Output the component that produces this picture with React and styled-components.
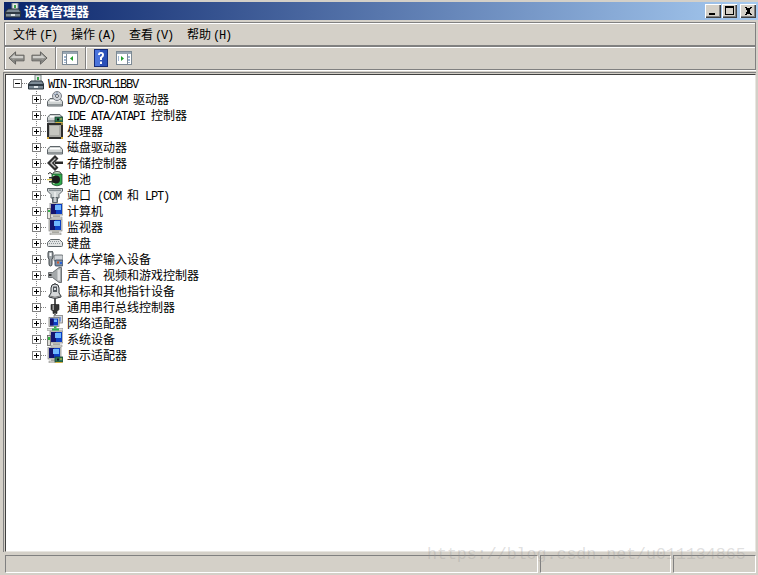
import React from "react";
import styled, { createGlobalStyle } from "styled-components";

const CJK = `"Noto Sans CJK SC", "Liberation Sans", sans-serif`;

const Global = createGlobalStyle`
  html, body { margin: 0; padding: 0; background: #d4d0c8; }
`;

const Win = styled.div`
  position: relative;
  box-sizing: border-box;
  width: 758px;
  height: 575px;
  padding: 2px 0 2px 4px;
  display: flex;
  flex-direction: column;
  background: #d4d0c8;
  overflow: hidden;
  font-family: ${CJK};
  font-size: 12px;
  color: #000;
`;
const TitleBar = styled.div`
  height: 18px;
  flex: none;
  display: flex;
  align-items: center;
  gap: 3px;
  padding: 0 2px 0 1px;
  background: linear-gradient(90deg, #0a246a 0%, #a6caf0 100%);
`;
const TitleText = styled.div`
  flex: 1;
  color: #fff;
  font-size: 13px;
  font-weight: 700;
  line-height: 18px;
`;
const WinBtn = styled.button`
  box-sizing: border-box;
  width: ${(p) => p.$w}px;
  height: 14px;
  margin-left: ${(p) => p.$ml || 0}px;
  padding: 0;
  display: flex;
  align-items: center;
  justify-content: center;
  background: #d4d0c8;
  border: 0;
  box-shadow: inset 1px 1px 0 #fff, inset -1px -1px 0 #404040, inset -2px -2px 0 #808080;
`;
const Band = styled.div`
  box-sizing: border-box;
  flex: none;
  margin: ${(p) => p.$mt}px 2px 0 0;
  height: ${(p) => p.$h}px;
  display: flex;
  align-items: center;
  gap: ${(p) => p.$gap}px;
  padding-left: ${(p) => p.$pl}px;
  border: 1px solid #808080;
  box-shadow: inset 1px 1px 0 #fff, 0 1px 0 #fff;
`;
const MenuItem = styled.div`
  line-height: 16px;
  white-space: pre;
`;
const MenuKey = styled.span`
  margin-left: 2px;
`;
const Mono = styled.span`
  font-family: "Liberation Mono", monospace;
  font-size: 12px;
  line-height: 1;
  letter-spacing: -1.2px;
  white-space: pre;
`;
const ToolGroup = styled.div`
  display: flex;
  align-items: center;
  gap: ${(p) => p.$gap || 0}px;
  margin: 0 ${(p) => p.$mr || 0}px 0 ${(p) => p.$ml || 0}px;
`;
const ToolSep = styled.div`
  width: 2px;
  height: 22px;
  background: #808080;
  border-right: 1px solid #fff;
  box-sizing: border-box;
  flex: none;
`;
const Tree = styled.div`
  flex: 1;
  min-height: 0;
  margin: 4px 2px 0 1px;
  background: #fff;
  border-top: 1px solid #404040;
  border-left: 1px solid #404040;
  border-right: 1px solid #e8e6e1;
  border-bottom: 1px solid #e8e6e1;
  box-shadow: 0 0 0 1px #d4d0c8, -1px -1px 0 1px #808080, 1px 1px 0 0 #fff;
`;
const Row = styled.div`
  position: relative;
  height: 16px;
  display: flex;
  align-items: center;
  padding-left: ${(p) => p.$indent}px;
  white-space: pre;
  line-height: 16px;
`;
const Label = styled.span`
  display: block;
  height: 16px;
  line-height: 16px;
`;
const VLine = styled.span`
  position: absolute;
  left: ${(p) => p.$x}px;
  top: 0;
  width: 1px;
  height: ${(p) => (p.$last ? 8 : 16)}px;
  background: repeating-linear-gradient(180deg, #808080 0 1px, transparent 1px 2px);
`;
const Expander = styled.span`
  position: relative;
  box-sizing: border-box;
  width: 9px;
  height: 9px;
  flex: none;
  background: #fff;
  border: 1px solid #808080;
  z-index: 1;
  &::before {
    content: "";
    position: absolute;
    left: 1px;
    top: 3px;
    width: 5px;
    height: 1px;
    background: #000;
  }
  &::after {
    content: "";
    display: ${(p) => (p.$open ? "none" : "block")};
    position: absolute;
    left: 3px;
    top: 1px;
    width: 1px;
    height: 5px;
    background: #000;
  }
`;
const HLine = styled.span`
  width: 6px;
  height: 1px;
  flex: none;
  background: repeating-linear-gradient(90deg, #808080 0 1px, transparent 1px 2px);
`;
const IconWrap = styled.span`
  width: 16px;
  height: 16px;
  flex: none;
  display: flex;
  margin-right: 4px;
`;
const Status = styled.div`
  flex: none;
  display: flex;
  gap: 2px;
  margin: 3px 2px 0 1px;
  height: 18px;
`;
const Panel = styled.div`
  box-sizing: border-box;
  width: ${(p) => p.$w}px;
  border-top: 1px solid #808080;
  border-left: 1px solid #808080;
  border-right: 1px solid #fff;
  border-bottom: 1px solid #fff;
`;
const Watermark = styled.div`
  position: absolute;
  left: 427px;
  top: 545px;
  font-family: "Liberation Mono", monospace;
  font-size: 16.6px;
  line-height: 20px;
  color: rgba(150, 150, 150, 0.3);
  white-space: pre;
`;

const Svg = ({ children, size = 16, crisp }) => (
  <svg width={size} height={size} viewBox="0 0 16 16" shapeRendering={crisp ? "crispEdges" : undefined}>
    {children}
  </svg>
);

const Server = () => (
  <Svg>
    <rect x="7" y="0" width="6" height="7" fill="#e8e8e8" stroke="#7a8a8a" strokeWidth="1" />
    <rect x="9" y="2" width="2" height="3" fill="#3aa14a" />
    <path d="M3 6h11l1.500 3v5H.5V9z" fill="#7d8b96" stroke="#2a343c" />
    <rect x="1" y="9" width="14" height="2" fill="#2f3a44" />
    <rect x="6" y="11" width="4" height="2" fill="#dfe5e8" />
  </Svg>
);
const DiskBase = () => (
  <>
    <path d="M3 7.500h10l2.500 3v4.500H.5v-4.500z" fill="#cfd3d3" stroke="#5f666a" />
    <rect x="1" y="13" width="14" height="2" fill="#8e9496" />
    <rect x="3" y="9" width="10" height="1.500" fill="#fff" />
  </>
);
const Dvd = () => (
  <Svg>
    <DiskBase />
    <circle cx="10" cy="5" r="4.500" fill="#d0d4da" stroke="#7a7f86" />
    <circle cx="10" cy="5" r="1.500" fill="#fff" stroke="#5b6065" />
    <path d="M10 1v2M7 3l2 1" stroke="#7f92ad" />
  </Svg>
);
const Card = () => (
  <>
    <rect x="8" y="10" width="8" height="5" fill="#2d7a54" stroke="#1a4030" strokeWidth=".8" />
    <rect x="10" y="11.500" width="2" height="2" fill="#111" />
    <rect x="13" y="11.500" width="2" height="1" fill="#e5c64a" />
    <rect x="8.500" y="15" width="7" height="1" fill="#d6b23c" />
  </>
);
const Ide = () => (
  <Svg>
    <DiskBase />
    <Card />
  </Svg>
);
const Cpu = () => (
  <Svg crisp>
    <rect x="0" y="0" width="16" height="16" fill="#2d2d2d" />
    <rect x="2" y="2" width="12" height="12" fill="#a9a9a4" />
    <rect x="3" y="3" width="9" height="9" fill="#c6c6c0" />
    <rect x="14" y="14" width="2" height="2" fill="#d8a93a" />
    <rect x="0" y="14" width="2" height="2" fill="#d8a93a" />
    <rect x="14" y="0" width="2" height="2" fill="#8a7a3a" />
  </Svg>
);
const Disk = () => (
  <Svg>
    <DiskBase />
  </Svg>
);
const Storage = () => (
  <Svg>
    <path d="M8 0 0 8l8 8 3.500-3.500L7 8l4.500-4.500z" fill="#2f2f2f" />
    <path d="M8 3 3 8l5 5 .9-.9L4.800 8l4.100-4.100z" fill="#c8c8c8" />
    <rect x="8" y="6.500" width="8" height="2.500" fill="#262626" />
  </Svg>
);
const Battery = () => (
  <Svg>
    <path d="M1 3q2-3 4 0" stroke="#222" fill="none" />
    <ellipse cx="10" cy="2.500" rx="4" ry="2" fill="#c9e8c7" stroke="#222" strokeWidth=".8" />
    <path d="M5 3h10v10q-5 3.500-10 0z" fill="#2fa84a" stroke="#1d4e2c" strokeWidth=".8" />
    <rect x="6" y="4" width="2" height="9" fill="#a3e2a1" />
    <rect x="2" y="6" width="5" height="1.500" fill="#333" />
    <rect x="2" y="10" width="5" height="1.500" fill="#333" />
    <circle cx="9" cy="8.500" r="4" fill="#1c1c1c" />
    <rect x="0" y="8" width="5" height="1.200" fill="#d9c84f" />
  </Svg>
);
const Port = () => (
  <Svg>
    <path d="M.5 1.500h15v2.500l-3.500 3.500v3.500H4V7.500L.5 4z" fill="#cdd2d3" stroke="#5c6468" />
    <rect x="2" y="2.500" width="12" height="1.500" fill="#8a9296" />
    <path d="M5.500 10.500h5v5h-5z" fill="#949ca0" stroke="#5c6468" />
    <rect x="7.500" y="5" width="1" height="10" fill="#fff" />
  </Svg>
);
const Screen = ({ x = 3 }) => (
  <>
    <rect x={x} y="0" width="13" height="12" fill="#d8d8d0" stroke="#6d6d6d" strokeWidth=".6" />
    <rect x={x + 1} y="1" width="11" height="10" fill="#0c3fc4" />
    <rect x={x + 1} y="1" width="5" height="10" fill="#14146e" />
    <rect x={x + 5} y="2" width="6" height="5" fill="#6fb8ff" />
    <rect x={x + 3} y="12" width="7" height="2" fill="#b8b8b0" />
    <rect x={x + 1} y="14" width="11" height="2" fill="#dcdcd6" stroke="#7a7a7a" strokeWidth=".5" />
  </>
);
const Tower = () => (
  <>
    <rect x="0.500" y="5.500" width="3" height="10" fill="#e8e8e2" stroke="#707070" strokeWidth=".8" />
    <rect x="1" y="7" width="2" height="2" fill="#35b34a" />
  </>
);
const Computer = () => (
  <Svg>
    <Screen />
    <Tower />
  </Svg>
);
const Monitor = () => (
  <Svg>
    <Screen x={2} />
  </Svg>
);
const Keyboard = () => (
  <Svg>
    <path d="M3.500 4.500h9l3 3v3q0 1-1 1h-13q-1 0-1-1v-3z" fill="#e2e4e4" stroke="#60686c" />
    <path d="M3 6.500h10M2 8.500h12" stroke="#8e969a" strokeDasharray="1 1" />
  </Svg>
);
const Hid = () => (
  <Svg>
    <path d="M1 2q0-2 2-2h1q2 0 2 2v4q0 1-1 2v5q0 2-1.500 2T2 13V8Q1 7 1 6z" fill="#9ea4a8" stroke="#2d3438" strokeWidth=".9" />
    <rect x="2.500" y="2" width="2" height="3" fill="#fff" />
    <rect x="7" y="4" width="9" height="6" rx="1" fill="#d0d4d8" stroke="#50585c" strokeWidth=".8" />
    <rect x="8" y="9" width="8" height="6" rx="1" fill="#7a90a8" stroke="#2d3a50" strokeWidth=".8" />
    <rect x="10" y="10.500" width="2" height="2" fill="#d85a2a" />
    <rect x="13" y="11" width="2" height="2" fill="#2a62d8" />
  </Svg>
);
const Sound = () => (
  <Svg>
    <path d="M1.500 5.500h4L12 .5h2.500v15H12L5.500 10.500h-4z" fill="#a4a8aa" stroke="#565b5e" strokeWidth=".8" />
    <rect x="10.500" y="2.500" width="2.500" height="11" fill="#dfe1e2" />
    <rect x="2" y="7" width="2.500" height="2" fill="#333" />
  </Svg>
);
const Mouse = () => (
  <Svg>
    <path d="M8 0v2" stroke="#333" />
    <path d="M4 5q0-4 4-4t4 4v5l2 3v1q-6 3-12 0v-1l2-3z" fill="#d6d8da" stroke="#2f3438" />
    <path d="M6 3.500h4V9H6z" fill="#50565c" />
    <path d="M7 5h2v2H7z" fill="#d8dde0" />
    <path d="M3 13q5 2.500 10 0" stroke="#777" fill="none" />
  </Svg>
);
const Usb = () => (
  <Svg>
    <rect x="7" y="0" width="2" height="6" fill="#555" />
    <path d="M4 5.500h8v5l-2 2v2H6v-2l-2-2z" fill="#333" stroke="#1c1c1c" strokeWidth=".6" />
    <rect x="5.500" y="6" width="1.500" height="5" fill="#a0a0a0" />
    <rect x="7" y="14" width="2" height="2" fill="#777" />
  </Svg>
);
const Network = () => (
  <Svg>
    <rect x="7" y="0.500" width="8.500" height="7.500" fill="#d4d8da" stroke="#707070" strokeWidth=".7" />
    <rect x="8.500" y="2" width="5.500" height="4.500" fill="#7d98d8" />
    <rect x="2" y="2.500" width="10" height="9" fill="#dcdcd4" stroke="#707070" strokeWidth=".7" />
    <rect x="3" y="3.500" width="8" height="7" fill="#0c3fc4" />
    <rect x="3" y="3.500" width="3.500" height="7" fill="#14146e" />
    <rect x="7" y="4.500" width="3" height="2.500" fill="#6fb8ff" />
    <rect x="7" y="11.500" width="2.500" height="2" fill="#2bb24a" />
    <rect x="0" y="13.500" width="16" height="2" fill="#dcdedc" stroke="#808080" strokeWidth=".5" />
    <rect x="5" y="13.500" width="7" height="2" fill="#2bb24a" />
  </Svg>
);
const System = () => (
  <Svg>
    <Screen />
    <rect x="0.500" y="4.500" width="3" height="10" fill="#dadad4" stroke="#606060" strokeWidth=".8" />
    <rect x="1" y="6" width="2" height="3" fill="#30b040" />
  </Svg>
);
const Display = () => (
  <Svg>
    <Screen x={1} />
    <Card />
  </Svg>
);

const Arrow = ({ flip }) => (
  <svg width="17" height="16" viewBox="0 0 18 16">
    <g transform={flip ? "matrix(-1 0 0 1 18 0)" : undefined}>
      <path d="M8 1.500 1 8l7 6.500V11h9V5H8z" fill="#9c9c98" stroke="#5e5e5a" />
      <path d="M7 4 3 8h13V6H7z" fill="#cfcfcb" />
      <path d="M3 8.500l4 3.500v-2h9" fill="none" stroke="#7a7a76" />
    </g>
  </svg>
);
const Panes = ({ right }) => (
  <svg width="16" height="14" viewBox="0 0 16 14" shapeRendering="crispEdges">
    <rect x="0.500" y="0.500" width="15" height="13" fill="#fff" stroke="#7d8a94" />
    <rect x="1" y="1" width="14" height="2" fill="#9aa8b4" />
    {right ? (
      <>
        <rect x="11" y="3" width="1" height="10" fill="#7d8a94" />
        <rect x="12" y="5" width="2" height="2" fill="#9fb6d0" />
        <rect x="12" y="8" width="2" height="2" fill="#9fb6d0" />
        <rect x="12" y="11" width="2" height="1" fill="#9fb6d0" />
        <path d="M5 5v5l3-2.500z" fill="#22a02c" shapeRendering="auto" />
        <rect x="2" y="5" width="1" height="5" fill="#9fb6d0" />
      </>
    ) : (
      <>
        <rect x="4" y="3" width="1" height="10" fill="#7d8a94" />
        <rect x="2" y="5" width="2" height="2" fill="#9fb6d0" />
        <rect x="2" y="8" width="2" height="2" fill="#9fb6d0" />
        <rect x="2" y="11" width="2" height="1" fill="#9fb6d0" />
        <path d="M11 5v5L8 7.500z" fill="#22a02c" shapeRendering="auto" />
      </>
    )}
  </svg>
);
const Help = () => (
  <svg width="14" height="18" viewBox="0 0 14 18">
    <rect x="0.500" y="0.500" width="13" height="17" fill="#2a50b8" stroke="#152c78" />
    <rect x="1" y="1" width="5" height="16" fill="#4a74dc" />
    <path d="M4 6q0-3 3-3t3 3q0 2-2 3v2H6V8q2-1 2-2.200 0-1-1-1t-1 1.200zM6 12.500h2V15H6z" fill="#fff" />
  </svg>
);

const Minimize = () => (
  <svg width="8" height="8" viewBox="0 0 8 8" shapeRendering="crispEdges"><rect x="0" y="6" width="6" height="2" fill="#000" /></svg>
);
const Maximize = () => (
  <svg width="10" height="10" viewBox="0 0 10 10" shapeRendering="crispEdges"><path d="M.5 1.500h8v7h-8z" fill="none" stroke="#000" /><rect x="0" y="0" width="9" height="2" fill="#000" /></svg>
);
const Close = () => (
  <svg width="9" height="8" viewBox="0 0 9 8" shapeRendering="crispEdges">
    <path d="M0 0h2l1 1h2l1-1h2L6 2v1L5 4l1 1v1l2 2H6L5 7H3L2 8H0l2-2V5l1-1-1-1V2z" fill="#000" />
  </svg>
);

const rows = [
  [Dvd, <><Mono>DVD/CD-ROM </Mono>驱动器</>],
  [Ide, <><Mono>IDE ATA/ATAPI </Mono>控制器</>],
  [Cpu, "处理器"],
  [Disk, "磁盘驱动器"],
  [Storage, "存储控制器"],
  [Battery, "电池"],
  [Port, <>端口<Mono> (COM </Mono>和<Mono> LPT)</Mono></>],
  [Computer, "计算机"],
  [Monitor, "监视器"],
  [Keyboard, "键盘"],
  [Hid, "人体学输入设备"],
  [Sound, "声音、视频和游戏控制器"],
  [Mouse, "鼠标和其他指针设备"],
  [Usb, "通用串行总线控制器"],
  [Network, "网络适配器"],
  [System, "系统设备"],
  [Display, "显示适配器"],
];

const menus = [
  ["文件", "(F)"],
  ["操作", "(A)"],
  ["查看", "(V)"],
  ["帮助", "(H)"],
];

export default function App() {
  return (
    <Win>
      <Global />
      <TitleBar>
        <Server />
        <TitleText>设备管理器</TitleText>
        <WinBtn $w={16}><Minimize /></WinBtn>
        <WinBtn $w={15} $ml={-2}><Maximize /></WinBtn>
        <WinBtn $w={16}><Close /></WinBtn>
      </TitleBar>
      <Band $mt={2} $h={24} $gap={14} $pl={8}>
        {menus.map(([a, b]) => (
          <MenuItem key={a}>{a}<MenuKey><Mono>{b}</Mono></MenuKey></MenuItem>
        ))}
      </Band>
      <Band $mt={0} $h={24} $gap={5} $pl={3}>
        <ToolGroup $gap={6} $mr={2}><Arrow /><Arrow flip /></ToolGroup>
        <ToolSep />
        <ToolGroup $mr={2}><Panes /></ToolGroup>
        <ToolSep />
        <ToolGroup $gap={8} $ml={2}><Help /><Panes right /></ToolGroup>
      </Band>
      <Tree>
        <Row $indent={7}>
          <Expander $open />
          <HLine />
          <IconWrap><Server /></IconWrap>
          <Label><Mono>WIN-IR3FURL1BBV</Mono></Label>
        </Row>
        {rows.map(([Icon, label], i) => (
          <Row key={i} $indent={26}>
            <VLine $x={30} $last={i === rows.length - 1} />
            <Expander />
            <HLine />
            <IconWrap><Icon /></IconWrap>
            <Label>{label}</Label>
          </Row>
        ))}
      </Tree>
      <Status>
        <Panel $w={533} />
        <Panel $w={131} />
        <Panel $w={83} />
      </Status>
      <Watermark>https://blog.csdn.net/u011134865</Watermark>
    </Win>
  );
}
